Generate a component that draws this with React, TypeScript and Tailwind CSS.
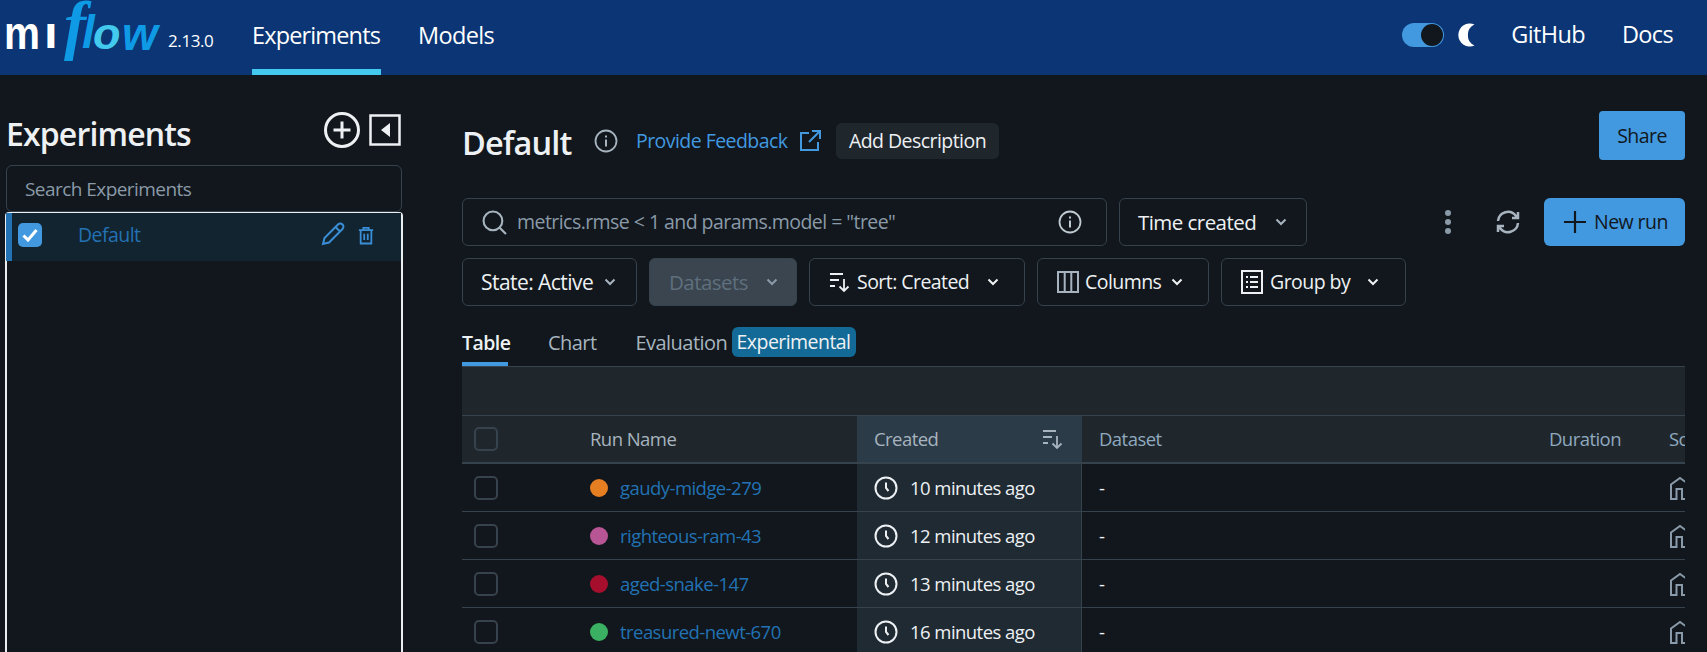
import React from "react";

const font = { fontFamily: '"Open Sans", "Noto Sans", sans-serif' };

function Chevron({ className = "" }: { className?: string }) {
  return (
    <svg width="14" height="10" viewBox="0 0 14 10" fill="none" stroke="currentColor" strokeWidth="2" className={className}>
      <path d="M2.500 2.500 7 7l4.500-4.500" />
    </svg>
  );
}

function SortIcon({ className = "" }: { className?: string }) {
  return (
    <svg width="22" height="22" viewBox="0 0 22 22" fill="none" stroke="currentColor" strokeWidth="1.8" className={className}>
      <path d="M1 3h13M1 9h9M1 15h5M15 8v12M10.500 15.500 15 20l4.500-4.500" />
    </svg>
  );
}

function Info({ size = 24 }: { size?: number }) {
  return (
    <svg width={size} height={size} viewBox="0 0 24 24" fill="none" stroke="currentColor" strokeWidth="1.8">
      <circle cx="12" cy="12" r="10.500" />
      <path d="M12 10.500v7M12 6.500v2" strokeWidth="2" />
    </svg>
  );
}

function Clock() {
  return (
    <svg width="24" height="24" viewBox="0 0 24 24" fill="none" stroke="#eef1f3" strokeWidth="2">
      <circle cx="12" cy="12" r="10.500" />
      <path d="M12 6.500V12l2.500 3" />
    </svg>
  );
}

function SourceIcon() {
  return (
    <svg width="24" height="24" viewBox="0 0 24 24" fill="none" stroke="#8a9aa8" strokeWidth="2" className="shrink-0">
      <path d="M2 23V8.500L11 2l9 6.500V23h-7V13H7.500v10H2Z" />
    </svg>
  );
}

function Box({ className = "", children }: { className?: string; children: React.ReactNode }) {
  return (
    <div className={`flex items-center h-[48px] rounded-[6px] border border-[#36424c] text-[#eef1f3] ${className}`}>
      {children}
    </div>
  );
}

function Logo() {
  return (
    <div className="relative w-[162px] h-[75px] select-none" style={{ fontFamily: '"Liberation Sans", sans-serif' }}>
      <span className="absolute left-[2px] top-[6px] text-[46px] leading-[54px] font-bold text-white origin-left scale-x-[0.88]">m</span>
      <span className="absolute left-[42px] top-[17px] text-[33px] leading-[40px] font-bold text-white origin-left scale-x-[1.500]">l</span>
      <span className="absolute left-[62px] top-[-8px] text-[66px] leading-[66px] italic font-bold text-[#0f9ae6]" style={{ fontFamily: '"Liberation Serif", serif' }}>f</span>
      <span className="absolute left-[80px] top-[4px] text-[46px] leading-[56px] font-bold italic text-[#0f9ae6]">l</span>
      <span className="absolute left-[91px] top-[6px] text-[45px] leading-[56px] font-bold italic text-[#43c9ed]">o</span>
      <span className="absolute left-[120px] top-[6px] text-[46px] leading-[56px] font-bold italic text-[#0f9ae6]">w</span>
    </div>
  );
}

const rows = [
  { name: "gaudy-midge-279", color: "#e67e22", time: "10 minutes ago" },
  { name: "righteous-ram-43", color: "#b85595", time: "12 minutes ago" },
  { name: "aged-snake-147", color: "#a50f2d", time: "13 minutes ago" },
  { name: "treasured-newt-670", color: "#3cb062", time: "16 minutes ago" },
];

const text = "text-[19.5px] tracking-[-0.55px]";

export default function App() {
  return (
    <div className={`w-[1707px] h-[652px] overflow-hidden bg-[#11171c] text-[#eef1f3] ${text}`} style={font}>
      <header className="h-[75px] bg-[#0b3574] flex items-stretch text-white">
        <div className="pl-[2px] w-[168px] shrink-0"><Logo /></div>
        <div className="mt-[29px] text-[17px] leading-[24px] tracking-[-0.4px] w-[47px]">2.13.0</div>
        <nav className="ml-[37px] flex gap-[37px] items-stretch text-[23.5px] tracking-[-0.65px]">
          <a className="h-[75px] pt-[18px] border-b-[6px] border-[#43c9ed] w-[129px] whitespace-nowrap tracking-[-0.85px]">Experiments</a>
          <a className="h-[75px] pt-[18px] whitespace-nowrap">Models</a>
        </nav>
        <div className="ml-auto flex items-center pr-[34px] text-[23.5px] tracking-[-0.65px] pb-[5px]">
          <div className="w-[42px] h-[24px] rounded-full bg-[#4299e0] flex items-center justify-end pr-[1px]">
            <div className="w-[22px] h-[22px] rounded-full bg-[#11171c]" />
          </div>
          <svg width="20" height="24" viewBox="0 0 20 24" className="ml-[12px]" fill="#fff">
            <path d="M18.500 22.500A11.500 11.500 0 1 1 18.500 1.500 10 10 0 0 0 12 12a10 10 0 0 0 6.500 10.500Z" />
          </svg>
          <a className="ml-[35px]">GitHub</a>
          <a className="ml-[37px]">Docs</a>
        </div>
      </header>

      <div className="flex h-[577px]">
        <aside className="w-[404px] shrink-0 pl-[5px] flex flex-col">
          <div className="h-[90px] pl-[1px] pt-[37px] flex items-start">
            <h1 className="text-[32px] leading-[44px] font-semibold tracking-[-0.85px] flex-1">Experiments</h1>
            <div className="flex items-center gap-[9px]">
              <svg width="36" height="36" viewBox="0 0 36 36" fill="none" stroke="#eef1f3" strokeWidth="3">
                <circle cx="18" cy="18" r="16.500" />
                <path d="M18 9.500v17M9.500 18h17" />
              </svg>
              <svg width="32" height="32" viewBox="0 0 32 32" fill="none" className="mr-[3px]">
                <rect x="1.500" y="1.500" width="29" height="29" stroke="#eef1f3" strokeWidth="2.500" />
                <path d="M21 9v14l-9-7Z" fill="#eef1f3" />
              </svg>
            </div>
          </div>
          <div className="ml-[1px] w-[396px] h-[47px] border border-[#36424c] rounded-[6px] flex items-center pl-[18px] pt-[2px] text-[#8a9aa8] text-[19px] shrink-0">
            Search Experiments
          </div>
          <div className="h-[440px] w-[398px] border-2 border-[#eaeef0] rounded-[4px] border-b-0 rounded-b-none shrink-0">
            <div className="h-[48px] -mt-[1px] pb-[4px] bg-[#132431] border-l-[6px] border-[#2272b4] flex items-center pl-[6px] -ml-[1px]">
              <div className="w-[24px] h-[24px] rounded-[5px] bg-[#4299e0] flex items-center justify-center">
                <svg width="16" height="14" viewBox="0 0 16 14" fill="none" stroke="#fff" strokeWidth="3">
                  <path d="M1.500 7.500 6 12l8.500-10" />
                </svg>
              </div>
              <span className="ml-[36px] text-[#2272b4] flex-1">Default</span>
              <svg width="24" height="24" viewBox="0 0 24 24" fill="none" stroke="#3a8ed6" strokeWidth="2" className="-mt-[3px]">
                <path d="M2 22l1.500-6L17 2.500a3 3 0 0 1 4.500 4.500L8 20.500 2 22ZM14.500 5l4.500 4.500" />
              </svg>
              <svg width="16" height="19" viewBox="0 0 18 20" fill="none" stroke="#3a8ed6" strokeWidth="2" className="ml-[13px] mr-[27px]">
                <path d="M1 4h16M6 4V1.500h6V4M3 4v15h12V4M7 8v7M11 8v7" />
              </svg>
            </div>
          </div>
        </aside>

        <main className="ml-[58px] w-[1223px] shrink-0 flex flex-col">
          <div className="h-[49px] mt-[36px] flex items-start shrink-0">
            <div className="mt-[12px] h-[36px] flex items-center">
              <h2 className="text-[32.5px] font-semibold tracking-[-0.9px] leading-[44px] w-[109px] whitespace-nowrap mt-[3px]">Default</h2>
              <span className="ml-[23px] text-[#a7b4bf] flex"><Info /></span>
              <a className="ml-[18px] text-[#4299e0] w-[150px] whitespace-nowrap">Provide Feedback</a>
              <svg width="22" height="22" viewBox="0 0 22 22" fill="none" stroke="#4299e0" strokeWidth="2" className="ml-[13px]">
                <path d="M10 3H2v17h17v-8M13 1h8v8M21 1 10 12" />
              </svg>
              <button className="ml-[15px] h-[36px] w-[163px] rounded-[6px] bg-[#1f272d] text-center whitespace-nowrap">Add Description</button>
            </div>
            <button className="ml-auto h-[49px] w-[86px] rounded-[4px] bg-[#4299e0] text-[#11171c]">Share</button>
          </div>

          <div className="mt-[38px] flex items-center shrink-0">
            <Box className="w-[645px] pl-[19px] pr-[24px]">
              <svg width="25" height="25" viewBox="0 0 24 24" fill="none" stroke="#a7b4bf" strokeWidth="2" className="shrink-0">
                <circle cx="10.500" cy="10.500" r="9" />
                <path d="m17 17 6 6" />
              </svg>
              <span className="ml-[10px] text-[#8a9aa8] flex-1 whitespace-nowrap">metrics.rmse &lt; 1 and params.model = "tree"</span>
              <span className="text-[#c0cad3] flex"><Info /></span>
            </Box>
            <Box className="ml-[12px] w-[188px] pl-[18px]">
              <span className="whitespace-nowrap text-[20.5px] pt-[1px]">Time created</span>
              <Chevron className="ml-[18px] text-[#a7b4bf]" />
            </Box>
            <svg width="8" height="26" viewBox="0 0 8 26" fill="#8a9aa8" className="ml-[137px]">
              <circle cx="4" cy="4" r="3" /><circle cx="4" cy="13" r="3" /><circle cx="4" cy="22" r="3" />
            </svg>
            <svg width="24" height="24" viewBox="0 0 24 24" fill="none" stroke="#a7b4bf" strokeWidth="2.500" className="ml-[44px]">
              <path d="M2 11a10 10 0 0 1 18-5l2 2M22 13a10 10 0 0 1-18 5l-2-2M22 2v6h-6M2 22v-6h6" />
            </svg>
            <button className="ml-[24px] h-[48px] w-[141px] rounded-[6px] bg-[#4299e0] text-[#11171c] flex items-center pl-[20px]">
              <svg width="22" height="22" viewBox="0 0 22 22" fill="none" stroke="#11171c" strokeWidth="2.200">
                <path d="M11 0v22M0 11h22" />
              </svg>
              <span className="ml-[8px] whitespace-nowrap">New run</span>
            </button>
          </div>

          <div className="mt-[12px] flex gap-[12px] shrink-0">
            <Box className="w-[175px] pl-[18px]">
              <span className="whitespace-nowrap text-[21px] pt-[1px]">State: Active</span>
              <Chevron className="ml-[10px] text-[#a7b4bf]" />
            </Box>
            <Box className="w-[148px] pl-[19px] bg-[#3a454f]">
              <span className="text-[#5f6f7d] text-[20.5px] pt-[1px]">Datasets</span>
              <Chevron className="ml-[17px] text-[#8a9aa8]" />
            </Box>
            <Box className="w-[216px] pl-[19px]">
              <SortIcon />
              <span className="ml-[6px] whitespace-nowrap">Sort: Created</span>
              <Chevron className="ml-[17px]" />
            </Box>
            <Box className="w-[172px] pl-[19px]">
              <svg width="22" height="22" viewBox="0 0 22 22" fill="none" stroke="#a7b4bf" strokeWidth="2">
                <path d="M1 1h20v20H1ZM7.700 1v20M14.300 1v20" />
              </svg>
              <span className="ml-[6px]">Columns</span>
              <Chevron className="ml-[9px]" />
            </Box>
            <Box className="w-[185px] pl-[19px]">
              <svg width="22" height="24" viewBox="0 0 22 24" fill="none" stroke="#eef1f3" strokeWidth="2">
                <path d="M1 1h20v22H1ZM5 7h2M9 7h8M5 12h2M9 12h8M5 17h2M9 17h8" />
              </svg>
              <span className="ml-[7px] whitespace-nowrap">Group by</span>
              <Chevron className="ml-[16px]" />
            </Box>
          </div>

          <div className="mt-[21px] h-[40px] flex items-start shrink-0 text-[#a7b4bf] text-[20px] border-b border-[#36424c]">
            <span className="w-[46px] h-[39px] pt-[1px] font-semibold text-[19.5px] text-[#eef1f3] border-b-[4px] border-[#4299e0]">Table</span>
            <span className="ml-[40px] pt-[1px]">Chart</span>
            <span className="ml-[39px] pt-[1px] w-[90px]">Evaluation</span>
            <span className="ml-[6px] h-[30px] w-[124px] rounded-[6px] bg-[#136a96] text-[#eef1f3] text-[19.5px] flex items-center justify-center">Experimental</span>
          </div>

          <div className="h-[49px] bg-[#1f272d] border-b border-[#36424c] shrink-0" />

          <div className="flex h-[48px] bg-[#1f272d] border-b-2 border-[#36424c] items-stretch shrink-0 text-[#a7b4bf] text-[18.5px] overflow-hidden">
            <div className="w-[128px] flex items-center pl-[12px] shrink-0">
              <div className="w-[24px] h-[24px] rounded-[5px] border-2 border-[#36424c]" />
            </div>
            <div className="w-[267px] flex items-center font-medium shrink-0">Run Name</div>
            <div className="w-[225px] bg-[#2c3b48] flex items-center pl-[17px] pr-[18px] justify-between shrink-0 font-medium">
              Created <SortIcon className="text-[#a7b4bf]" />
            </div>
            <div className="w-[467px] pl-[17px] flex items-center font-medium shrink-0 text-[#8fa9bf]">Dataset</div>
            <div className="w-[120px] flex items-center font-medium shrink-0 text-[#8fa9bf]">Duration</div>
            <div className="flex items-center font-medium text-[#8fa9bf]">Source</div>
          </div>

          {rows.map((r) => (
            <div key={r.name} className="flex h-[48px] border-b border-[#36424c] items-stretch shrink-0 overflow-hidden text-[18.5px]">
              <div className="w-[128px] flex items-center pl-[12px] shrink-0">
                <div className="w-[24px] h-[24px] rounded-[5px] border-2 border-[#36424c]" />
              </div>
              <div className="w-[267px] flex items-center shrink-0">
                <span className="w-[18px] h-[18px] rounded-full shrink-0" style={{ backgroundColor: r.color }} />
                <a className="ml-[12px] text-[#2272b4] whitespace-nowrap">{r.name}</a>
              </div>
              <div className="w-[225px] bg-[#1f2a33] border-r border-[#36424c] flex items-center pl-[17px] shrink-0">
                <Clock />
                <span className="ml-[12px] whitespace-nowrap">{r.time}</span>
              </div>
              <div className="w-[587px] pl-[17px] flex items-center shrink-0">-</div>
              <div className="flex items-center"><SourceIcon /></div>
            </div>
          ))}
        </main>
      </div>
    </div>
  );
}
